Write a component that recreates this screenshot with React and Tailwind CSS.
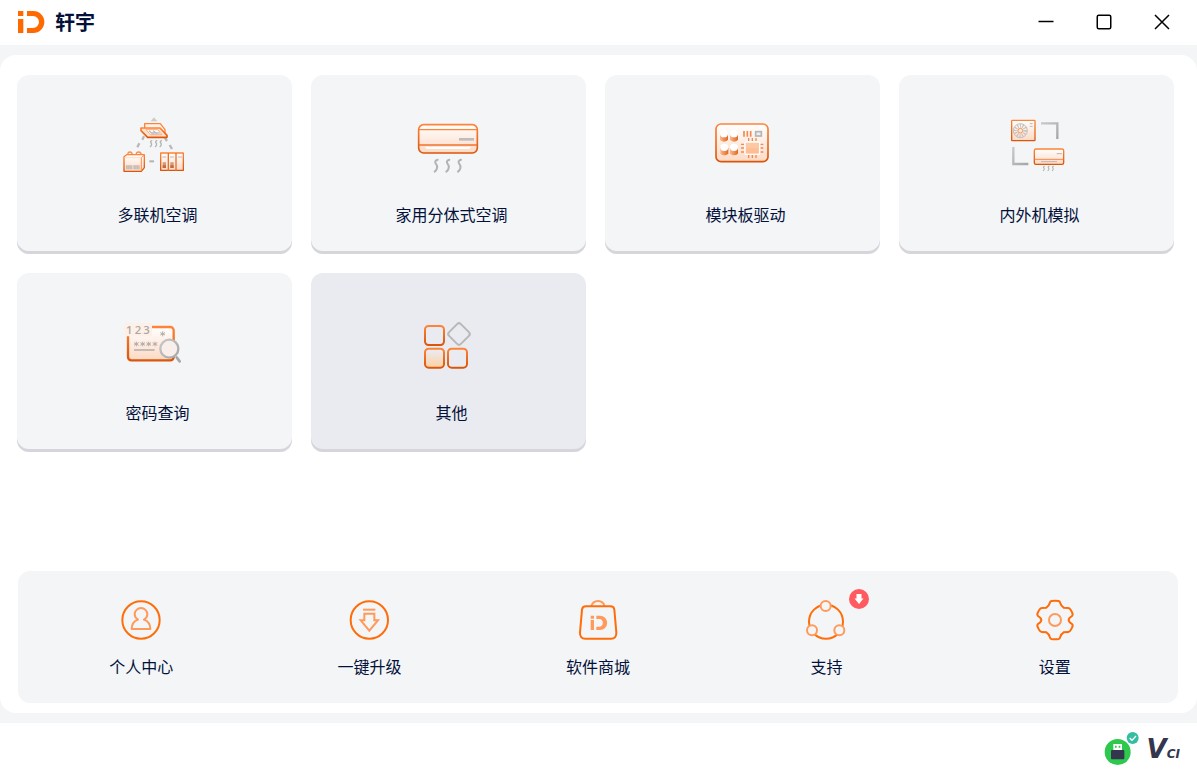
import React, { useState } from "react";

// Shared gradients for the card icons
const Gradients = () => (
  <svg className="absolute h-0 w-0" aria-hidden="true">
    <defs>
      <linearGradient id="orange" x1="0" y1="0" x2="0" y2="1">
        <stop offset="0" stopColor="#ff8437" />
        <stop offset="1" stopColor="#d9560c" />
      </linearGradient>
      <linearGradient id="peach" x1="0" y1="0" x2="0" y2="1">
        <stop offset="0" stopColor="#ffffff" />
        <stop offset="1" stopColor="#fdd9c4" />
      </linearGradient>
      <linearGradient id="grey" x1="0" y1="0" x2="1" y2="1">
        <stop offset="0" stopColor="#c9c9c9" />
        <stop offset="1" stopColor="#a6a6a6" />
      </linearGradient>
      <linearGradient id="cap" x1="0" y1="0" x2="1" y2="0">
        <stop offset="0" stopColor="#ffb68a" />
        <stop offset="1" stopColor="#dd6a25" />
      </linearGradient>
      <linearGradient id="glow" x1="0" y1="0" x2="0" y2="1">
        <stop offset="0.1" stopColor="#ffd0a0" stopOpacity="0" />
        <stop offset="1" stopColor="#ffd0a0" />
      </linearGradient>
    </defs>
  </svg>
);

const Wave = ({ x, y, s = 1, w = 5 }) => (
  <path
    d="M9 0C2 2 0 7 3 11C8 17 9 20 7 26C6 30 4 33 0 36"
    transform={`translate(${x} ${y}) scale(${s})`}
    stroke="#b3b3b3"
    strokeWidth={w}
    strokeLinecap="round"
    fill="none"
  />
);

const MultiSplitIcon = () => (
  <svg className="h-[70px] w-[81px]" viewBox="12 15 243 210" fill="none">
    <path d="M122 49L132 37L142 49Z" fill="#cccccc" />
    <path d="M102 94L97 104M88 115L82 127M164 97L171 108M179 120L186 132" stroke="#b8b8b8" strokeWidth="7" />
    <path d="M118 169H132" stroke="#b3b3b3" strokeWidth="6" />
    <path d="M104 56H151L165 74V84H104Z" fill="#fff5ef" stroke="#ff8437" strokeWidth="4" strokeLinejoin="round" />
    <path d="M93 69H150L171 91V97H113L93 77Z" fill="#ffe3d3" stroke="url(#orange)" strokeWidth="5" strokeLinejoin="round" />
    <path d="M108 74H143L156 89H121Z" fill="#fff" stroke="#ff8b44" strokeWidth="2" />
    <path d="M117 77L128 87M129 77L141 86M125 84H149" stroke="#bcbcbc" strokeWidth="4" />
    <Wave x={121} y={107} s={0.5} w={8} />
    <Wave x={136} y={107} s={0.5} w={8} />
    <Wave x={150} y={107} s={0.5} w={8} />
    <path d="M54 151V145Q54 141 60 141Q66 141 67 150M79 151V145Q80 141 86 141Q93 141 94 150" stroke="#ff8b44" strokeWidth="4" />
    <path d="M42 155L50 149H103V188L94 199H42Z" fill="url(#peach)" stroke="url(#orange)" strokeWidth="4" strokeLinejoin="round" />
    <path d="M94 199V158L102 151" stroke="#ff8b44" strokeWidth="3" />
    <path d="M43 158H94" stroke="#ffd2ba" strokeWidth="2" />
    <path d="M48 181H67V193H48ZM70 181H89V193H70Z" fill="#c5b9b3" />
    <path d="M53 181V193M58 181V193M63 181V193M75 181V193M80 181V193M85 181V193" stroke="#e9dfda" strokeWidth="1" />
    <path d="M152 144H220V196H152Z" fill="url(#peach)" stroke="url(#orange)" strokeWidth="4" strokeLinejoin="round" />
    <path d="M175 144V197M198 144V197" stroke="#ea7027" strokeWidth="4" />
    <path d="M157 156H169M180 156H192M204 156H216" stroke="#bababa" strokeWidth="3" />
    <path d="M158 172H168V189H158ZM181 172H191V189H181Z" fill="#cf9b80" />
    <path d="M158 181H168V189H158ZM181 181H191V189H181Z" fill="#c26b3c" />
  </svg>
);

const WallUnitIcon = () => (
  <svg className="h-[70px] w-[81px]" viewBox="24 15 243 210" fill="none">
    <rect x="56" y="59" width="176" height="85" rx="15" fill="url(#peach)" stroke="url(#orange)" strokeWidth="5" />
    <path d="M57 74H231" stroke="#ff8437" strokeWidth="4" />
    <path d="M57 120H231" stroke="#ee742c" strokeWidth="4" />
    <path d="M76 126H212Q211 132 204 132H84Q77 132 76 126Z" fill="#fff" />
    <path d="M177 103H222" stroke="#bdbdbd" strokeWidth="8" />
    <Wave x={104} y={164} w={6} />
    <Wave x={139} y={164} w={6} />
    <Wave x={174} y={164} w={6} />
  </svg>
);

const Capacitor = ({ x, y }) => (
  <g transform={`translate(${x} ${y})`}>
    <path d="M-12 0H12V18Q0 28 -12 18Z" fill="url(#cap)" />
    <ellipse cx="0" cy="-1" rx="12" ry="11" fill="#fff" />
  </g>
);

const BoardIcon = () => (
  <svg className="h-[70px] w-[81px]" viewBox="6 15 243 210" fill="none">
    <rect x="48" y="57" width="156" height="113" rx="15" fill="url(#peach)" stroke="url(#orange)" strokeWidth="5" />
    <Capacitor x={72} y={87} />
    <Capacitor x={102} y={87} />
    <Capacitor x={73} y={128} />
    <Capacitor x={102} y={128} />
    <path d="M132 78V95M142 78V95M152 78V95" stroke="#f28a50" strokeWidth="5" />
    <rect x="167" y="80" width="17" height="13" fill="#eee" stroke="#b5b5b5" strokeWidth="5" />
    <path d="M146 99V109M157 99V109M168 99V109M146 149V159M157 149V159M168 149V159M123 118H132M123 129H132M123 141H132M181 118H190M181 129H190M181 141H190" stroke="#f28a50" strokeWidth="4" />
    <rect x="135" y="111" width="44" height="37" rx="3" fill="#ffc8a4" stroke="#fff" strokeWidth="4" />
    <path d="M139 130H175V144H139Z" fill="#ffbd93" />
  </svg>
);

const SimulateIcon = () => (
  <svg className="h-[70px] w-[81px]" viewBox="3 15 243 210" fill="none">
    <rect x="50" y="46" width="70" height="61" rx="2" fill="url(#peach)" stroke="url(#orange)" strokeWidth="4" />
    <circle cx="76" cy="77" r="21" stroke="#bfbfbf" strokeWidth="3" />
    <circle cx="76" cy="77" r="14" stroke="#c4bfbc" strokeWidth="11" strokeDasharray="3 4" />
    <circle cx="76" cy="77" r="7" fill="#ffe9dc" stroke="#f39a66" strokeWidth="3" />
    <path d="M104 56H113M104 64H113" stroke="#bbb" strokeWidth="3" />
    <path d="M138 55H187V102" stroke="url(#grey)" strokeWidth="7" />
    <path d="M55 126V177H100" stroke="url(#grey)" strokeWidth="7" />
    <rect x="118" y="132" width="88" height="46" rx="5" fill="url(#peach)" stroke="url(#orange)" strokeWidth="4" />
    <path d="M119 163H205" stroke="#f7874a" strokeWidth="3" />
    <path d="M185 146H201M138 170H186" stroke="#bcb5b1" strokeWidth="3" />
    <Wave x={145} y={184} s={0.36} w={9} />
    <Wave x={159} y={184} s={0.36} w={9} />
    <Wave x={172} y={184} s={0.36} w={9} />
  </svg>
);

const PasswordIcon = () => (
  <svg className="h-[70px] w-[81px]" viewBox="12 -6 243 210" fill="none">
    <rect x="54" y="51" width="137" height="100" rx="10" fill="url(#peach)" stroke="url(#orange)" strokeWidth="7" />
    <rect x="44" y="39" width="82" height="40" rx="2" fill="#fff0e7" />
    <text y="72" fontSize="34" fontWeight="600" fontFamily="'Open Sans', sans-serif" fill="#aaa8a7">
      <tspan x="48">1</tspan>
      <tspan x="74">2</tspan>
      <tspan x="100">3</tspan>
    </text>
    <path d="M158 64V79M151 68L165 75M165 68L151 75M79 95V109M72 98L86 106M86 98L72 106M98 95V109M91 98L105 106M105 98L91 106M116 95V109M109 98L123 106M123 98L109 106M135 95V109M128 98L142 106M142 98L128 106" stroke="#b2acaa" strokeWidth="3" />
    <path d="M72 120H134" stroke="#b8b2af" strokeWidth="5" />
    <path d="M200 142L209 154" stroke="#a8a8a8" strokeWidth="8" strokeLinecap="round" />
    <circle cx="178" cy="116" r="27" fill="#f8efea" stroke="url(#grey)" strokeWidth="7" />
  </svg>
);

const OtherIcon = () => (
  <svg className="h-[70px] w-[81px]" viewBox="24 9 243 210" fill="none">
    <rect x="75" y="63" width="57" height="57" rx="11" stroke="url(#orange)" strokeWidth="6" />
    <rect x="75" y="131" width="57" height="57" rx="11" fill="url(#glow)" stroke="url(#orange)" strokeWidth="6" />
    <rect x="144" y="131" width="57" height="57" rx="11" stroke="url(#orange)" strokeWidth="6" />
    <rect x="152" y="62" width="50" height="50" rx="8" transform="rotate(45 177 87)" stroke="#b8b8b8" strokeWidth="6" />
  </svg>
);

const UserIcon = () => (
  <svg className="size-11" viewBox="57 24 132 132" fill="none">
    <circle cx="123" cy="90" r="56" stroke="#ff6d0a" strokeWidth="6" />
    <path d="M114 89Q104 83 104 73A19 19 0 0 1 142 73Q142 83 132 89Q151 96 151 117H95Q95 96 114 89Z" stroke="#ff9a5a" strokeWidth="6" strokeLinejoin="round" />
  </svg>
);

const UpgradeIcon = () => (
  <svg className="size-11" viewBox="743 24 132 132" fill="none">
    <circle cx="807" cy="90" r="56" stroke="#ff6d0a" strokeWidth="6" />
    <path d="M788 59H825" stroke="#ff9a5a" strokeWidth="6" />
    <path d="M792 71H822V91H833L807 122L781 91H792Z" stroke="#ff9a5a" strokeWidth="6" />
  </svg>
);

const StoreIcon = () => (
  <svg className="size-11" viewBox="48 39 132 132" fill="none">
    <path d="M94 64Q98 48 114 48Q130 48 134 64" stroke="#ff9a5a" strokeWidth="6" />
    <path d="M78 64H151Q162 64 163 74L169 142Q170 161 153 161H76Q59 161 60 142L66 74Q67 64 78 64Z" stroke="#ff6d0a" strokeWidth="6" />
    <path d="M92 92H102V101H92ZM92 105H102V135H92ZM109 92H120A21 21 0 0 1 120 135H109V125H120A12 12 0 0 0 120 102H109Z" fill="#ff9a5a" />
  </svg>
);

const SupportIcon = () => (
  <svg className="size-11" viewBox="733 39 132 132" fill="none">
    <circle cx="799" cy="110" r="51" stroke="#ff6d0a" strokeWidth="6" />
    <g fill="#f3f5f7" stroke="#ff9a5a" strokeWidth="6">
      <circle cx="798" cy="63" r="15" />
      <circle cx="757" cy="136" r="15" />
      <circle cx="839" cy="136" r="15" />
    </g>
  </svg>
);

const SettingsIcon = () => (
  <svg className="size-11" viewBox="99 24 132 132" fill="none">
    <path
      d="M154 33Q165 31 176 33Q180 34 181 40Q183 48 191 53L205 54Q210 54 216 67Q220 74 216 78Q206 84 206 90Q206 96 216 102Q220 106 216 113Q210 126 205 126L191 127Q183 132 181 140Q180 146 176 147Q165 149 154 147Q150 146 149 140Q147 132 139 127L125 126Q120 126 114 113Q110 106 114 102Q124 96 124 90Q124 84 114 78Q110 74 114 67Q120 54 125 54L139 53Q147 48 149 40Q150 34 154 33Z"
      stroke="#ff6d0a"
      strokeWidth="6"
    />
    <circle cx="165" cy="90" r="18" stroke="#ff9a5a" strokeWidth="6" />
  </svg>
);

const modules = [
  { id: "vrf", label: "多联机空调", icon: MultiSplitIcon },
  { id: "home", label: "家用分体式空调", icon: WallUnitIcon },
  { id: "board", label: "模块板驱动", icon: BoardIcon },
  { id: "simulate", label: "内外机模拟", icon: SimulateIcon },
  { id: "password", label: "密码查询", icon: PasswordIcon },
  { id: "other", label: "其他", icon: OtherIcon },
];

const shortcuts = [
  { id: "user", label: "个人中心", icon: UserIcon },
  { id: "upgrade", label: "一键升级", icon: UpgradeIcon },
  { id: "store", label: "软件商城", icon: StoreIcon },
  { id: "support", label: "支持", icon: SupportIcon, badge: true },
  { id: "settings", label: "设置", icon: SettingsIcon },
];

const Header = () => (
  <header className="flex items-center justify-between bg-white pr-[6px] pb-px pl-[17px]">
    <div className="flex items-center gap-[10px]">
      <svg className="h-6 w-7" viewBox="51 30 84 72" fill="#ff6a00">
        <path d="M54 33H70V48H54ZM54 57H70V99H54ZM81 33H100A33 33 0 0 1 100 99H81V84H99A18 18 0 0 0 99 48H81Z" />
      </svg>
      <h1 className="text-xl leading-6 font-bold">轩宇</h1>
    </div>
    <div className="flex">
      <button className="flex h-11 w-[58px] items-center justify-center" aria-label="最小化">
        <svg className="size-4" viewBox="0 0 16 16" stroke="#000" strokeWidth="1.5">
          <path d="M0.500 7.500H15.500" />
        </svg>
      </button>
      <button className="flex h-11 w-[58px] items-center justify-center" aria-label="最大化">
        <svg className="size-4" viewBox="0 0 16 16" fill="none" stroke="#000" strokeWidth="1.5">
          <rect x="1.250" y="1.250" width="13.500" height="13.500" rx="1.500" />
        </svg>
      </button>
      <button className="flex h-11 w-[58px] items-center justify-center" aria-label="关闭">
        <svg className="size-4" viewBox="0 0 16 16" stroke="#000" strokeWidth="1.500">
          <path d="M1 1L15 15M15 1L1 15" />
        </svg>
      </button>
    </div>
  </header>
);

const Footer = () => (
  <footer className="flex h-[50px] items-center justify-end bg-white pr-[17px] text-[#33364d]">
    <svg className="h-9 w-9" viewBox="312 420 108 108">
      <circle cx="356" cy="486" r="39" fill="#2dc84d" />
      <path d="M343 462H369V481H343Z" fill="#fff" />
      <path d="M348 467H353V473H348ZM359 467H364V473H359Z" fill="#2dc84d" />
      <rect x="336" y="480" width="40" height="28" rx="3" fill="#33364d" />
      <circle cx="401" cy="444" r="18" fill="#35bda0" />
      <path d="M392 444L399 451L411 438" fill="none" stroke="#fff" strokeWidth="4" />
    </svg>
    <div className="ml-2 flex items-baseline pt-0.5 font-['DejaVu_Sans',sans-serif] leading-6 font-bold italic">
      <span className="text-[26px]">V</span>
      <span className="text-xs">CI</span>
    </div>
  </footer>
);

const App = () => {
  const [activeModule, setActiveModule] = useState("other");

  return (
    <div className="flex min-h-screen flex-col bg-[#f3f5f7] font-['Noto_Sans_CJK_SC',sans-serif] text-[#03113a]">
      <Gradients />
      <Header />
      <main className="my-[10px] flex flex-1 flex-col rounded-2xl bg-white pt-5 pb-[10px]">
        <div className="grid grid-cols-4 gap-[19px] pr-[23px] pl-[17px]">
          {modules.map((item) => (
            <button
              key={item.id}
              onClick={() => setActiveModule(item.id)}
              className={`flex flex-col items-center rounded-xl pt-[35px] pb-7 shadow-[inset_0_-3px_0_#d5d5db] ${
                activeModule === item.id ? "bg-[#eaebf0]" : "bg-[#f3f5f7]"
              }`}
            >
              <item.icon />
              <span className="mt-[22px] pl-1.5 text-base leading-6">{item.label}</span>
            </button>
          ))}
        </div>
        <nav className="mt-auto mr-[19px] ml-[18px] grid grid-cols-5 rounded-xl bg-[#f3f5f7] px-[9px] pt-[27px] pb-[25px]">
          {shortcuts.map((item) => (
            <button key={item.id} className="flex flex-col items-center">
              <span className="relative">
                <item.icon />
                {item.badge && (
                  <svg className="absolute -top-[9px] left-[45px] size-5" viewBox="0 0 20 20">
                    <circle cx="10" cy="10" r="10" fill="#ff5a5f" />
                    <path d="M7.500 5H12.500V9.500H14.500L10 15L5.500 9.500H7.500Z" fill="#fff" />
                  </svg>
                )}
              </span>
              <span className="mt-3 text-base leading-6">{item.label}</span>
            </button>
          ))}
        </nav>
      </main>
      <Footer />
    </div>
  );
};

export default App;
